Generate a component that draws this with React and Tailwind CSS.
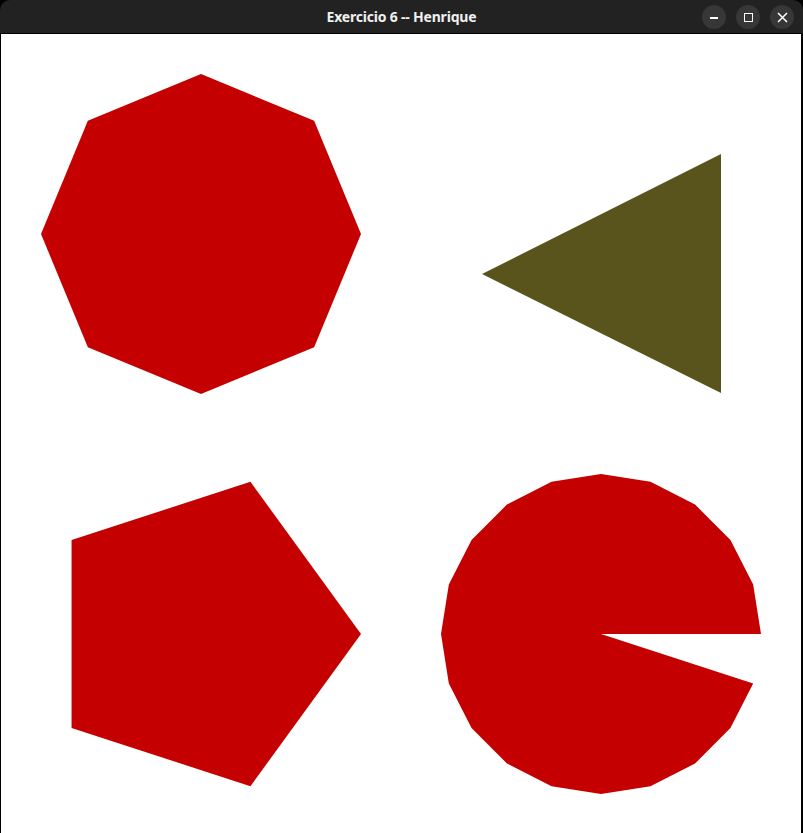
import React from "react";

const R = 160;
const poly = (cx, cy, n, r = R) =>
  Array.from({ length: n }, (_, i) => {
    const a = (i * 2 * Math.PI) / n;
    return `${(cx + r * Math.cos(a)).toFixed(2)},${(cy - r * Math.sin(a)).toFixed(2)}`;
  }).join(" ");

const pac = (() => {
  const pts = ["600,600"];
  for (let i = 0; i < 20; i++) {
    const a = (i * 18 * Math.PI) / 180;
    pts.push(`${(600 + R * Math.cos(a)).toFixed(2)},${(600 - R * Math.sin(a)).toFixed(2)}`);
  }
  return pts.join(" ");
})();

function WinButton({ children }) {
  return (
    <div className="w-6 h-6 rounded-full bg-[#373737] flex items-center justify-center">
      {children}
    </div>
  );
}

export default function App() {
  return (
    <div className="w-[803px] h-[833px] bg-black flex flex-col overflow-hidden">
      <div className="h-[33px] shrink-0 bg-[#222222] rounded-t-[10px] grid grid-cols-[1fr_auto_1fr] items-center">
        <div />
        <div
          className="text-[14px] font-bold text-[#f0f0f0] tracking-[-0.2px]"
          style={{ fontFamily: '"Noto Sans", "DejaVu Sans", sans-serif' }}
        >
          Exercicio 6 -- Henrique
        </div>
        <div className="flex justify-end items-center gap-[10px] pr-[9px] pt-[1px]">
          <WinButton>
            <div className="w-[8px] h-[2px] bg-white mt-[2px]" />
          </WinButton>
          <WinButton>
            <div className="w-[9px] h-[9px] border-[1.5px] border-white" />
          </WinButton>
          <WinButton>
            <svg width="11" height="11" viewBox="0 0 11 11">
              <path d="M1 1 L10 10 M10 1 L1 10" stroke="white" strokeWidth="1.5" />
            </svg>
          </WinButton>
        </div>
      </div>
      <div className="h-px bg-black shrink-0" />
      <div className="flex flex-1 min-h-0">
        <div className="w-px bg-black shrink-0" />
        <div className="w-[800px] h-[800px] bg-white shrink-0">
          <svg width="800" height="800" viewBox="0 0 800 800">
            <polygon points={poly(200, 200, 8)} fill="#c40000" />
            <polygon points="720,120 481,240 720,359" fill="#59541c" />
            <polygon points={poly(200, 600, 5)} fill="#c40000" />
            <polygon points={pac} fill="#c40000" />
          </svg>
        </div>
        <div className="flex-1 bg-black" />
      </div>
    </div>
  );
}
